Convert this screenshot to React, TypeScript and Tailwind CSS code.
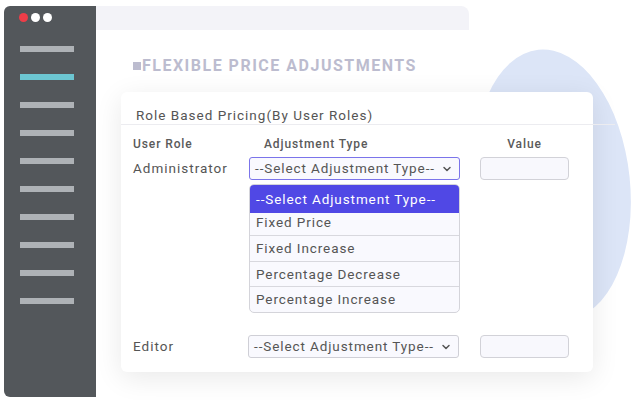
import React from 'react';

const font = { fontFamily: 'Roboto, "Liberation Sans", sans-serif' };

const opciones = ['Fixed Price', 'Fixed Increase', 'Percentage Decrease', 'Percentage Increase'];
const alturas = ['h-[23px] items-start leading-[18px]', 'h-[26px] items-center', 'h-[25px] items-center', 'h-[25px] items-center'];

function Chevron() {
  return (
    <svg width="12" height="12" viewBox="0 0 24 24" fill="none" stroke="#555" strokeWidth="3" strokeLinecap="round" strokeLinejoin="round">
      <path d="M6 9l6 6 6-6" />
    </svg>
  );
}

function SelectBox({ focused }: { focused?: boolean }) {
  return (
    <div
      className={`w-[211px] h-[23px] flex items-center justify-between pl-[5px] pr-[6px] rounded-[3px] bg-[#f9f9fe] border ${focused ? 'border-[#7b74ea]' : 'border-[#cfcfd6]'}`}
    >
      <span className="text-[13.5px] tracking-[0.9px] text-[#555]">--Select Adjustment Type--</span>
      <Chevron />
    </div>
  );
}

function ValueInput() {
  return <div className="w-[89px] h-[23px] rounded-[4px] border border-[#d2d2d8] bg-[#f8f8fd]" />;
}

export default function App() {
  return (
    <div className="w-[640px] h-[400px] bg-white overflow-hidden relative" style={font}>
      {/* blob decorativo */}
      <div className="absolute left-[475px] top-[49px] w-[155px] h-[272px] rounded-[50%] bg-[#dce5f7] rotate-[-6deg]" />

      <div className="relative flex pt-[6px] pl-[4px] h-full">
        {/* sidebar */}
        <div className="w-[92px] h-[391px] bg-[#53575b] rounded-l-[6px] flex flex-col items-start pl-[15px]">
          <div className="flex gap-[3px] mt-[7px]">
            <span className="w-[9px] h-[9px] rounded-full bg-[#ee3d48]" />
            <span className="w-[9px] h-[9px] rounded-full bg-white" />
            <span className="w-[9px] h-[9px] rounded-full bg-white" />
          </div>
          <div className="flex flex-col gap-[22px] mt-[24px] ml-[1px]">
            {Array.from({ length: 10 }).map((_, i) => (
              <div key={i} className={`w-[54px] h-[6px] ${i === 1 ? 'bg-[#6cc6d2]' : 'bg-[#aeb2b6]'}`} />
            ))}
          </div>
        </div>

        {/* contenido */}
        <div className="flex-1 flex flex-col">
          <div className="w-[373px] h-[24px] bg-[#f3f3f8] rounded-tr-[8px]" />

          <div className="flex items-center ml-[37px] mt-[26px] h-[20px]">
            <span className="w-[8px] h-[8px] bg-[#bcbccf] mr-[1px]" />
            <span className="text-[16px] font-bold tracking-[1.5px] text-[#bcbccf]">FLEXIBLE PRICE ADJUSTMENTS</span>
          </div>

          <div className="ml-[25px] mt-[16px] w-[472px] h-[280px] bg-white rounded-[6px] shadow-[0_6px_28px_rgba(0,0,0,0.09)]">
            <div className="pt-[15px] pl-[15px] h-[32px] text-[13.5px] leading-[16px] tracking-[1px] text-[#555]">
              Role Based Pricing(By User Roles)
            </div>
            <div className="w-[494px] h-px bg-[#ececf0]" />

            <div className="flex items-center pl-[12px] h-[20px] mt-[9px] text-[12px] font-medium tracking-[0.9px] text-[#5a5a5a]">
              <span className="w-[116px]">User Role</span>
              <span className="w-[231px] pl-[15px]">Adjustment Type</span>
              <span className="w-[89px] text-center">Value</span>
            </div>

            <div className="flex items-center pl-[12px] mt-[3px] h-[23px]">
              <span className="w-[116px] text-[13.5px] tracking-[1px] text-[#555]">Administrator</span>
              <SelectBox focused />
              <div className="w-[20px]" />
              <ValueInput />
            </div>

            <div className="ml-[128px] mt-[4px] w-[211px] rounded-[5px] border border-[#d4d4da] bg-[#f9f9fe] overflow-hidden">
              <div className="h-[28px] flex items-center pl-[6px] bg-[#5048e5] text-white text-[13.5px] tracking-[0.9px]">
                --Select Adjustment Type--
              </div>
              {opciones.map((o, i) => (
                <div
                  key={o}
                  className={`flex pl-[6px] text-[13.5px] tracking-[0.9px] text-[#555] ${alturas[i]} ${i < opciones.length - 1 ? 'border-b border-[#d8d8de]' : ''}`}
                >
                  {o}
                </div>
              ))}
            </div>

            <div className="flex items-center pl-[12px] mt-[22px] h-[23px]">
              <span className="w-[115px] text-[13.5px] tracking-[1px] text-[#555]">Editor</span>
              <SelectBox />
              <div className="w-[21px]" />
              <ValueInput />
            </div>
          </div>
        </div>
      </div>
    </div>
  );
}
